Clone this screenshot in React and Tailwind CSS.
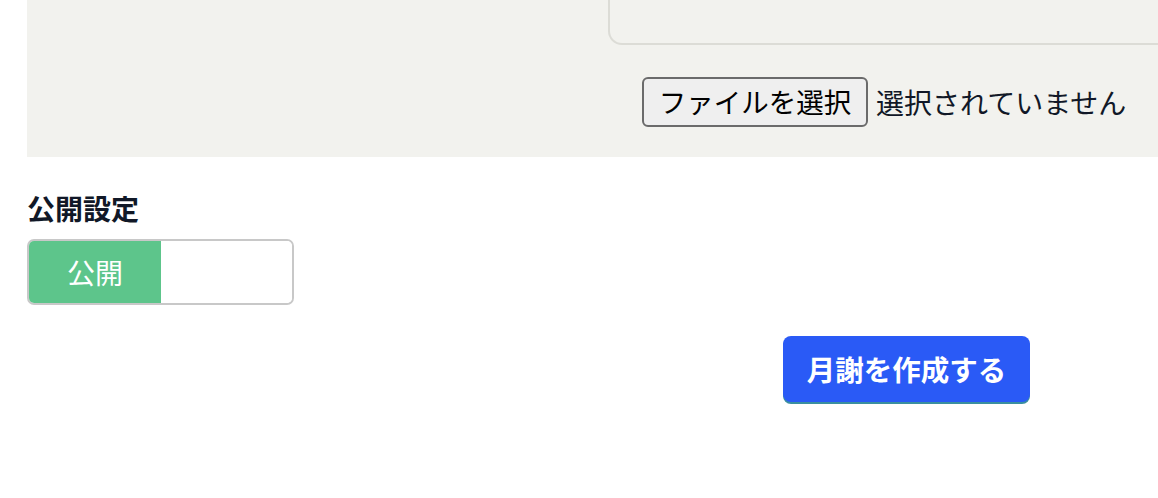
export default function App() {
  const font = { fontFamily: '"Noto Sans CJK JP", "Noto Sans", sans-serif' };

  return (
    <div className="w-[1158px] h-[498px] overflow-hidden bg-white" style={font}>
      {/* upload panel */}
      <div className="ml-[27px] w-[1200px] h-[157px] bg-[#f2f2ee]">
        <div className="ml-[581px] w-[700px] h-[45px] border-2 border-t-0 border-[#dcdcd6] rounded-b-[14px]" />
        <div className="mt-[32px] ml-[615px] flex items-center gap-[8px]">
          <button className="w-[226px] h-[50px] border-2 border-[#6b6b6b] rounded-[6px] bg-[#efefef] text-[27.5px] leading-none text-black">
            ファイルを選択
          </button>
          <span className="text-[28px] leading-none text-[#111827]">選択されていません</span>
        </div>
      </div>

      {/* visibility */}
      <div className="ml-[27px] mt-[31px]">
        <h2 className="text-[28px] leading-[40px] font-bold text-[#111827]">公開設定</h2>
        <div className="mt-[11px] w-[267px] h-[66px] flex border-2 border-[#c8c8c8] rounded-[7px] overflow-hidden">
          <div className="w-[132px] bg-[#5dc58b] flex items-center justify-center text-white text-[28px]">
            公開
          </div>
          <div className="flex-1 bg-white" />
        </div>
      </div>

      <div className="mt-[31px] ml-[783px]">
        <button className="w-[247px] h-[66px] rounded-[8px] bg-[#2a5af6] text-white text-[28.5px] font-semibold shadow-[0_2px_0_#3a8fa0]">
          月謝を作成する
        </button>
      </div>
    </div>
  );
}
